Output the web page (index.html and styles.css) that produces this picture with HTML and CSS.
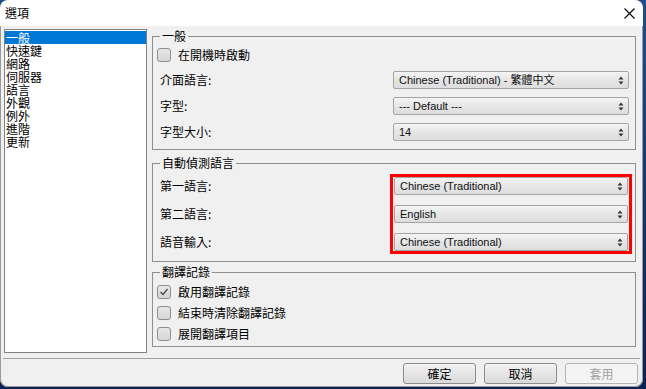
FILE: index.html
```html
<!DOCTYPE html>
<html>
<head>
<meta charset="utf-8">
<link rel="stylesheet" href="styles.css">
</head>
<body>
<div class="window">
  <div class="titlebar">
    <span class="title">選項</span>
    <svg class="close" width="11" height="11" viewBox="0 0 11 11"><path d="M0.5 0.5 L10.5 10.5 M10.5 0.5 L0.5 10.5" stroke="#000" stroke-width="1.1" fill="none"/></svg>
  </div>
  <div class="main">
    <ul class="list">
      <li class="sel">一般</li>
      <li>快速鍵</li>
      <li>網路</li>
      <li>伺服器</li>
      <li>語言</li>
      <li>外觀</li>
      <li>例外</li>
      <li>進階</li>
      <li>更新</li>
    </ul>
    <div class="panel">
      <fieldset class="group g1">
        <legend>一般</legend>
        <div class="check-row"><span class="cb"></span>在開機時啟動</div>
        <div class="field-row first"><span class="label">介面語言:</span><div class="combo"><span>Chinese (Traditional) - 繁體中文</span><svg class="arrows" width="6" height="9" viewBox="0 0 6 9"><path d="M3 0.5 L5.5 3.5 L0.5 3.5 Z M0.5 5.5 L5.5 5.5 L3 8.5 Z" fill="#333"/></svg></div></div>
        <div class="field-row"><span class="label">字型:</span><div class="combo"><span>--- Default ---</span><svg class="arrows" width="6" height="9" viewBox="0 0 6 9"><path d="M3 0.5 L5.5 3.5 L0.5 3.5 Z M0.5 5.5 L5.5 5.5 L3 8.5 Z" fill="#333"/></svg></div></div>
        <div class="field-row"><span class="label">字型大小:</span><div class="combo"><span>14</span><svg class="arrows" width="6" height="9" viewBox="0 0 6 9"><path d="M3 0.5 L5.5 3.5 L0.5 3.5 Z M0.5 5.5 L5.5 5.5 L3 8.5 Z" fill="#333"/></svg></div></div>
      </fieldset>
      <fieldset class="group g2">
        <legend>自動偵測語言</legend>
        <div class="g2-grid">
          <div class="labels">
            <span class="label">第一語言:</span>
            <span class="label">第二語言:</span>
            <span class="label">語音輸入:</span>
          </div>
          <div class="redbox">
            <div class="combo"><span>Chinese (Traditional)</span><svg class="arrows" width="6" height="9" viewBox="0 0 6 9"><path d="M3 0.5 L5.5 3.5 L0.5 3.5 Z M0.5 5.5 L5.5 5.5 L3 8.5 Z" fill="#333"/></svg></div>
            <div class="combo"><span>English</span><svg class="arrows" width="6" height="9" viewBox="0 0 6 9"><path d="M3 0.5 L5.5 3.5 L0.5 3.5 Z M0.5 5.5 L5.5 5.5 L3 8.5 Z" fill="#333"/></svg></div>
            <div class="combo"><span>Chinese (Traditional)</span><svg class="arrows" width="6" height="9" viewBox="0 0 6 9"><path d="M3 0.5 L5.5 3.5 L0.5 3.5 Z M0.5 5.5 L5.5 5.5 L3 8.5 Z" fill="#333"/></svg></div>
          </div>
        </div>
      </fieldset>
      <fieldset class="group g3">
        <legend>翻譯記錄</legend>
        <div class="check-row"><span class="cb checked"><svg width="10" height="10" viewBox="0 0 10 10"><path d="M1.5 5 L4 7.5 L8.5 2" stroke="#444" stroke-width="1.2" fill="none"/></svg></span>啟用翻譯記錄</div>
        <div class="check-row"><span class="cb"></span>結束時清除翻譯記錄</div>
        <div class="check-row"><span class="cb"></span>展開翻譯項目</div>
      </fieldset>
    </div>
  </div>
  <div class="footer">
    <button class="btn">確定</button>
    <button class="btn">取消</button>
    <button class="btn disabled">套用</button>
  </div>
</div>
</body>
</html>
```

FILE: styles.css
```css
html, body {
  margin: 0;
  padding: 0;
}
body {
  width: 646px;
  height: 389px;
  overflow: hidden;
  background: linear-gradient(180deg, #1d4f8f 0%, #12326a 60%, #0b2150 100%);
  font-family: "Noto Sans CJK TC", "Liberation Sans", sans-serif;
  font-size: 12px;
  color: #000;
}
.window {
  width: 643px;
  height: 387px;
  background: #f0f0f0;
  border-radius: 8px;
  overflow: hidden;
  display: flex;
  flex-direction: column;
  box-sizing: border-box;
  box-shadow: inset 0 0 0 1px #9a9a9a;
}
.titlebar {
  height: 26px;
  flex: none;
  background: #ffffff;
  display: flex;
  align-items: center;
  justify-content: space-between;
  padding: 0 8px 0 5px;
  border-radius: 8px 8px 0 0;
}
.title {
  font-size: 12px;
  line-height: 14px;
}
.close {
  display: block;
}
.main {
  display: flex;
  padding: 3px 0 0 4px;
  flex: none;
}
.list {
  list-style: none;
  margin: 0;
  padding: 1px 0 0 0;
  width: 143px;
  height: 324px;
  box-sizing: border-box;
  background: #fff;
  border: 1px solid #828282;
}
.list li {
  height: 13px;
  line-height: 13px;
  font-size: 12px;
  padding-left: 1px;
  white-space: nowrap;
}
.list li.sel {
  background: #0078d7;
  color: #fff;
}
.panel {
  margin-left: 5px;
  width: 484px;
  display: flex;
  flex-direction: column;
}
.group {
  margin: 0;
  min-width: 0;
  border: 1px solid #8f8f8f;
  padding: 2px 6px 4px 7px;
}
.group legend {
  padding: 0 2px;
  margin: 0;
  font-size: 12px;
  line-height: 14px;
}
.check-row {
  display: flex;
  align-items: center;
  height: 21px;
  margin-left: -3px;
  line-height: 14px;
  white-space: nowrap;
}
.g1 .check-row {
  height: 20px;
}
.cb {
  width: 14px;
  height: 14px;
  box-sizing: border-box;
  border: 1px solid #8e8e8e;
  border-radius: 3px;
  background: linear-gradient(180deg, #e6e6e6 0%, #d6d6d6 100%);
  margin-right: 7px;
  display: flex;
  align-items: center;
  justify-content: center;
  flex: none;
}
.cb svg {
  display: block;
}
.field-row {
  display: flex;
  align-items: center;
  justify-content: space-between;
  height: 26px;
}
.field-row.first {
  margin-top: 2px;
}
.label {
  line-height: 14px;
  white-space: nowrap;
}
.combo {
  width: 236px;
  height: 18px;
  box-sizing: border-box;
  border: 1px solid #a5a5a5;
  border-radius: 2px;
  background: linear-gradient(180deg, #f4f4f4 0%, #e6e6e6 50%, #dddddd 100%);
  display: flex;
  align-items: center;
  justify-content: space-between;
  padding: 0 4px 0 5px;
  font-family: "Liberation Sans", "Noto Sans CJK TC", sans-serif;
  font-size: 11px;
  color: #111;
  white-space: nowrap;
}
.combo span {
  line-height: 14px;
}
.arrows {
  display: block;
  flex: none;
}
.g2 {
  margin-top: 6px;
  padding: 0 3px 5px 7px;
}
.g2-grid {
  display: flex;
  justify-content: space-between;
}
.labels {
  display: flex;
  flex-direction: column;
  margin-top: 2px;
}
.labels .label {
  height: 28px;
  display: flex;
  align-items: center;
}
.redbox {
  margin-top: 4px;
  width: 242px;
  height: 80px;
  box-sizing: border-box;
  border: 3px solid #ff0000;
  padding: 0 1px;
  display: flex;
  flex-direction: column;
  justify-content: space-between;
}
.redbox .combo {
  width: 234px;
}
.g3 {
  margin-top: 3px;
  padding: 2px 6px 2px 7px;
}
.footer {
  margin: 5px 3px 0 3px;
  border-top: 1px solid #a0a0a0;
  padding: 4px 2px 0 0;
  display: flex;
  justify-content: flex-end;
  gap: 8px;
}
.btn {
  width: 73px;
  height: 21px;
  box-sizing: border-box;
  border: 1px solid #8c8c8c;
  border-radius: 3px;
  background: linear-gradient(180deg, #f3f3f3 0%, #e5e5e5 50%, #dadada 100%);
  font-family: "Noto Sans CJK TC", sans-serif;
  font-size: 12px;
  line-height: 14px;
  color: #000;
  padding: 0;
  margin: 0;
}
.btn.disabled {
  color: #a0a0a0;
  border-color: #b5b5b5;
  background: #f4f4f4;
}
```
